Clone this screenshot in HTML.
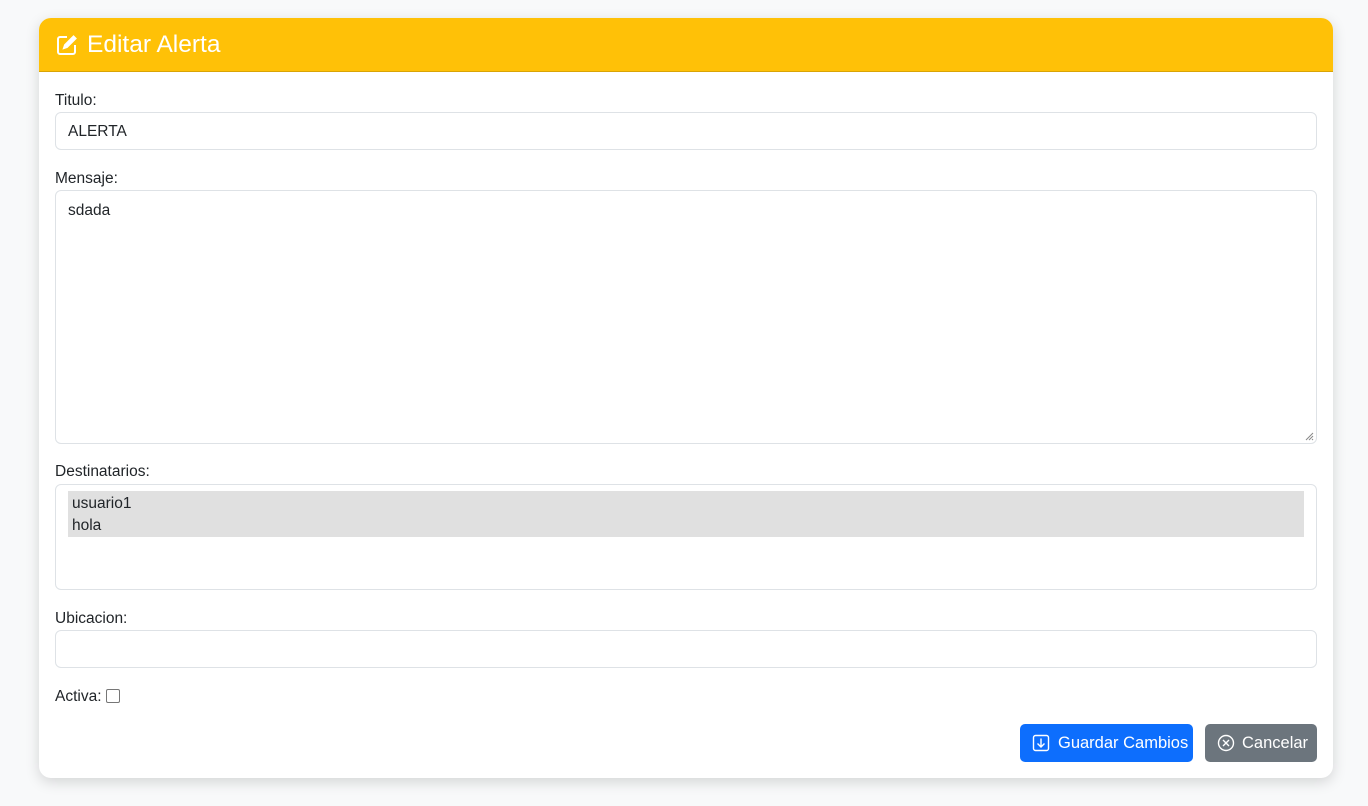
<!DOCTYPE html>
<html><head><meta charset="utf-8"><style>
*{box-sizing:border-box;margin:0;padding:0}
body{width:1368px;height:806px;background:#f8f9fa;font-family:"Liberation Sans",sans-serif;color:#212529;position:relative;overflow:hidden}
.card{position:absolute;left:39px;top:18px;width:1294px;height:760px;background:#fff;border-radius:12px;box-shadow:0 4px 14px rgba(0,0,0,.15);overflow:hidden}
.hdr{position:absolute;left:0;top:0;width:100%;height:54px;background:#ffc107;border-bottom:1px solid #d9a406;color:#fff;font-size:24.5px;line-height:54px;padding-left:48px}
.hdr svg{position:absolute;left:17px;top:16px}
.lbl{position:absolute;left:16px;font-size:15.5px;color:#212529}
.in{position:absolute;left:16px;width:1262px;border:1px solid #dee2e6;border-radius:6px;background:#fff;font-size:15.5px}
.btn{position:absolute;top:706px;height:38px;border-radius:5px;color:#fff;font-size:16.5px;line-height:39px}
.btn svg{position:absolute;left:12px;top:10px}
</style></head><body>
<div class="card">
<div class="hdr"><svg width="22" height="22" viewBox="0 0 22 22" fill="none" stroke="#fff" stroke-width="2"><path d="M11 3H4a2 2 0 0 0-2 2v13a2 2 0 0 0 2 2h13a2 2 0 0 0 2-2v-7"/><path d="M17.5 2.5l2 2L11 13l-3 1 1-3z" fill="#fff"/></svg>Editar Alerta</div>
<div class="lbl" style="top:74px">Titulo:</div>
<div class="in" style="top:94px;height:38px;padding:10px 12px">ALERTA</div>
<div class="lbl" style="top:152px">Mensaje:</div>
<div class="in" style="top:172px;height:254px;padding:11px 12px">sdada<svg style="position:absolute;right:2px;bottom:2px" width="9" height="9" viewBox="0 0 9 9" stroke="#888" stroke-width="1"><path d="M8 1L1 8M8 4L4 8M8 7L7 8"/></svg></div>
<div class="lbl" style="top:445px">Destinatarios:</div>
<div class="in" style="top:466px;height:106px;padding:6px 12px">
<div style="background:#e0e0e0;height:46px;padding:1px 4px;line-height:22px;padding-top:2px">usuario1<br>hola</div></div>
<div class="lbl" style="top:592px">Ubicacion:</div>
<div class="in" style="top:612px;height:38px"></div>
<div class="lbl" style="top:670px">Activa:<span style="display:inline-block;width:14px;height:14px;border:1px solid #767676;border-radius:2px;vertical-align:-2px;margin-left:4px"></span></div>
<div class="btn" style="left:981px;width:173px;background:#0d6efd;padding-left:38px"><svg width="18" height="18" viewBox="0 0 18 18" fill="none" stroke="#fff" stroke-width="1.4"><rect x="1.5" y="1.5" width="15" height="15" rx="2"/><path d="M9 4.5v8M5.5 9.5L9 13l3.5-3.5"/></svg>Guardar Cambios</div>
<div class="btn" style="left:1166px;width:112px;background:#6c757d;padding-left:37px"><svg width="18" height="18" viewBox="0 0 18 18" fill="none" stroke="#fff" stroke-width="1.4"><circle cx="9" cy="9" r="7.5"/><path d="M6 6l6 6M12 6l-6 6"/></svg>Cancelar</div>
</div>
</body></html>
